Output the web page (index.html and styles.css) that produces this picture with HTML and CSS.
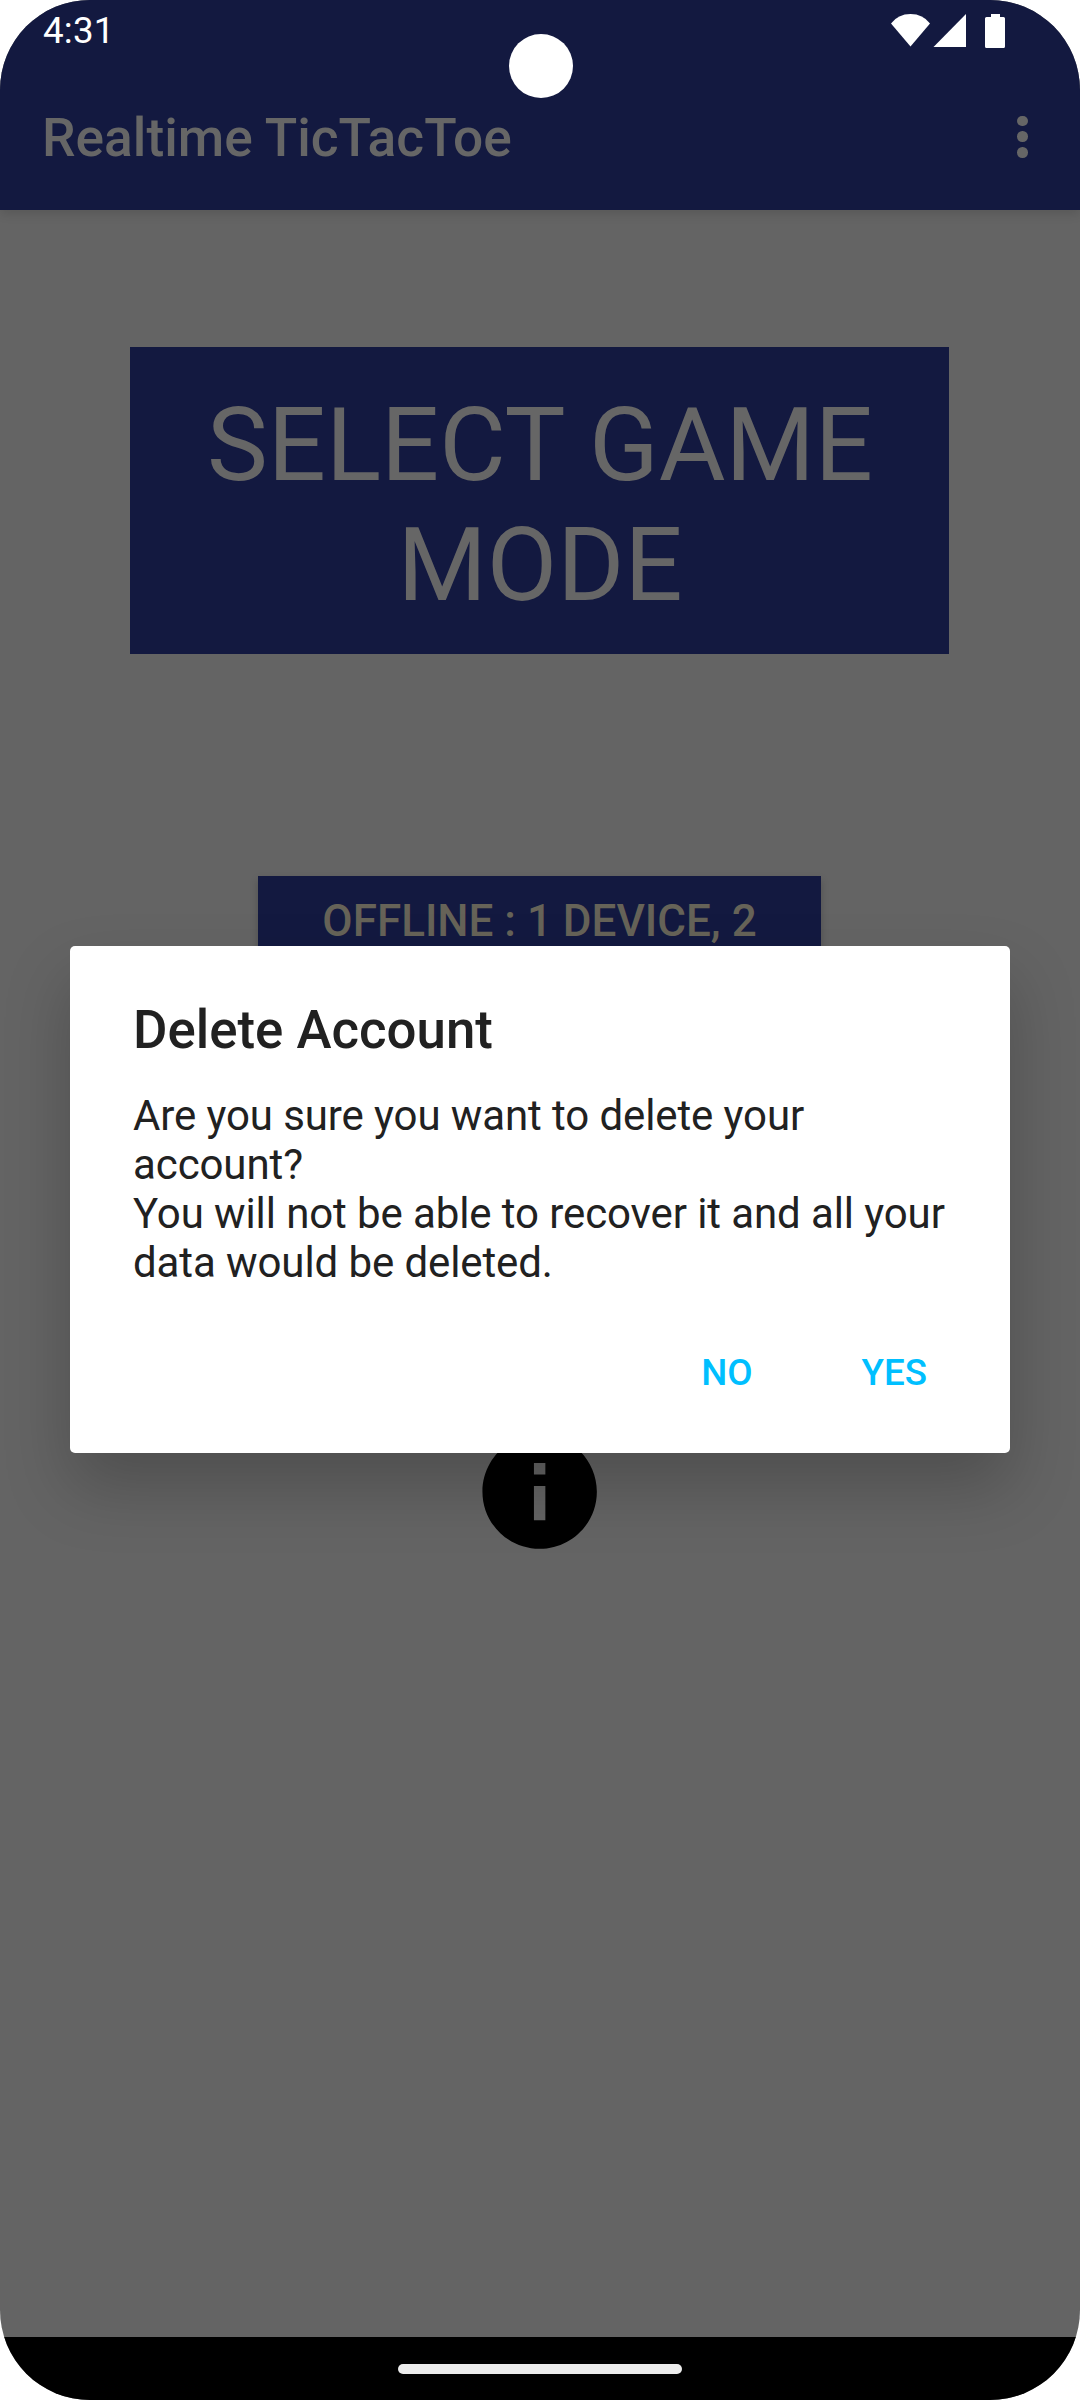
FILE: index.html
```html
<!DOCTYPE html>
<html lang="en">
<head>
<meta charset="utf-8">
<title>Realtime TicTacToe</title>
<link rel="stylesheet" href="styles.css">
</head>
<body>
<div class="device">
  <header class="header">
    <div class="status-bar">
      <span class="clock">4:31</span>
      <svg class="status-icons" viewBox="0 0 120 36" width="120" height="36">
        <path d="M1 9.500Q8 0 20.500 0T40 9.500L20.500 32.500Z"/>
        <path d="M43.500 33L76 0V33Z"/>
        <path d="M101 0h9v3h3.500q1.500 0 1.500 1.500v28q0 1.500-1.500 1.500h-17q-1.500 0-1.500-1.500v-28q0-1.500 1.500-1.500h4.500z"/>
      </svg>
    </div>
    <div class="toolbar">
      <h1 class="app-title">Realtime TicTacToe</h1>
      <div class="overflow"><i></i><i></i><i></i></div>
    </div>
  </header>
  <main class="content">
    <div class="mode-title">SELECT GAME MODE</div>
    <div class="mode-button">OFFLINE : 1 DEVICE, 2 PLAYERS</div>
    <svg class="info" viewBox="0 0 24 24"><path d="M12 2C6.480 2 2 6.480 2 12s4.480 10 10 10 10-4.480 10-10S17.520 2 12 2zm1 15h-2v-6h2v6zm0-8h-2V7h2v2z"/></svg>
  </main>
  <footer class="nav-bar"><div class="nav-pill"></div></footer>
  <div class="camera"></div>
  <section class="dialog">
    <h2 class="dialog-title">Delete Account</h2>
    <p class="dialog-text">Are you sure you want to delete your<br>account?<br>You will not be able to recover it and all your<br>data would be deleted.</p>
    <div class="dialog-actions"><span>NO</span><span>YES</span></div>
  </section>
</div>
</body>
</html>
```
FILE: styles.css
```css
* { box-sizing: border-box; }
body { margin: 0; background: #fff; font-family: Roboto, sans-serif; }
.device { position: relative; width: 1080px; height: 2400px; display: flex; flex-direction: column; overflow: hidden; border-radius: 90px; background: #646464; }
.header { position: relative; z-index: 1; height: 210px; background: #131940; box-shadow: 0 4px 10px rgba(0,0,0,.12); }
.status-bar { height: 63px; padding: 9px 70px 0 43px; display: flex; justify-content: space-between; }
.clock { color: #fff; font-size: 36.75px; line-height: 44px; letter-spacing: .2px; }
.status-icons { fill: #fff; margin-top: 5px; }
.toolbar { height: 147px; display: flex; justify-content: space-between; padding: 0 52.500px 0 42px; }
.app-title { margin: 44px 0 0; font-size: 53.3px; font-weight: 500; line-height: 62px; color: #666; }
.overflow { display: flex; flex-direction: column; gap: 5.250px; margin-top: 52.500px; }
.overflow i { width: 10.500px; height: 10.500px; border-radius: 50%; background: #666; }
.content { flex: 1; display: flex; flex-direction: column; align-items: center; padding: 137px 1px 0 0; }
.mode-title { width: 819px; height: 307px; padding: 38px 59px 0 60px; background: #131940; color: #666; font-size: 102.375px; line-height: 120px; text-align: center; }
.mode-button { width: 563px; height: 168px; margin-top: 222px; padding: 20px 40px 0; background: #131940; color: #666358; font-size: 44px; font-weight: 500; line-height: 50px; text-align: center; box-shadow: 0 4px 8px rgba(0,0,0,.2); }
.info { width: 137.300px; height: 137.300px; margin-top: 378.700px; }
.nav-bar { height: 63px; background: #000; display: flex; justify-content: center; padding-top: 27px; }
.nav-pill { width: 284px; height: 10px; border-radius: 5px; background: #ececec; }
.camera { position: absolute; z-index: 2; left: 508.500px; top: 33.500px; width: 64px; height: 64px; border-radius: 50%; background: #fff; }
.dialog { position: absolute; z-index: 3; left: 70px; top: 946px; width: 940px; height: 507px; padding: 53px 63px 0; border-radius: 5px; background: #fff; box-shadow: 0 34px 66px rgba(0,0,0,.21); }
.dialog-title { margin: 0; color: #212121; font-size: 52.8px; font-weight: 500; line-height: 62px; }
.dialog-text { margin: 30px 0 0; color: #212121; font-size: 42px; line-height: 49px; letter-spacing: -.1px; white-space: nowrap; }
.dialog-actions { display: flex; justify-content: flex-end; gap: 109px; margin-top: 64px; padding-right: 20px; color: #00bfff; font-size: 36.75px; font-weight: 500; line-height: 44px; }
```
